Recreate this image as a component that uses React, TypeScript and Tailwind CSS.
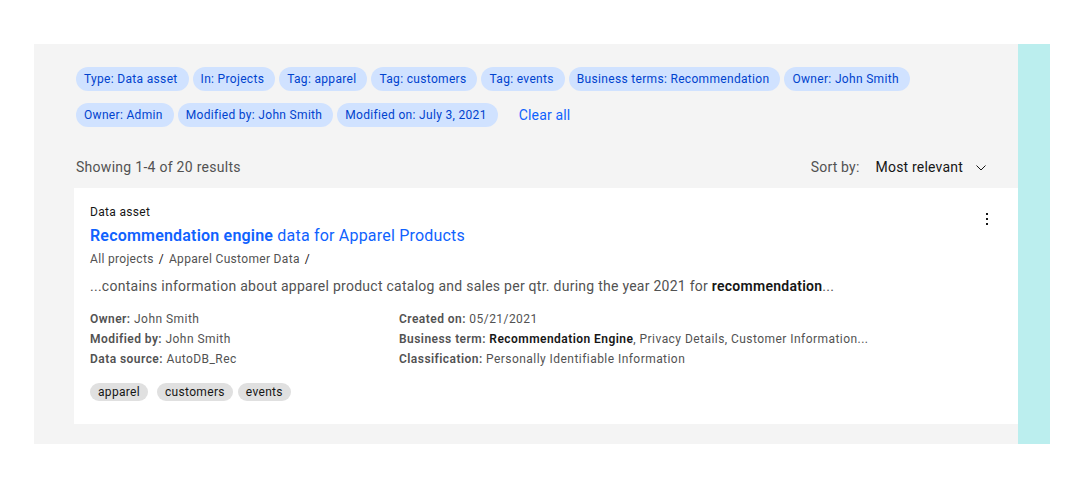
import { JSX } from 'react'

const filters = [
  'Type: Data asset',
  'In: Projects',
  'Tag: apparel',
  'Tag: customers',
  'Tag: events',
  'Business terms: Recommendation',
  'Owner: John Smith',
  'Owner: Admin',
  'Modified by: John Smith',
  'Modified on: July 3, 2021'
]

const FilterTag = ({ label }: { label: string }): JSX.Element => (
  <span className="inline-flex items-center h-6 pl-2 pr-[11px] rounded-full bg-[#d0e2ff] text-[#0043ce] text-[12px] leading-4 tracking-[0.32px] whitespace-nowrap">
    {label}
  </span>
)

const GrayTag = ({ label }: { label: string }): JSX.Element => (
  <span className="inline-flex items-center h-[18px] px-2 rounded-full bg-[#e0e0e0] text-[#161616] text-[12px] leading-4 tracking-[0.32px]">
    {label}
  </span>
)

const Meta = ({ label, children }: { label: string; children: React.ReactNode }): JSX.Element => (
  <div className="text-[12px] leading-5 tracking-[0.45px] text-[#525252] whitespace-nowrap">
    <span className="font-semibold">{label}</span> {children}
  </div>
)

export default function App(): JSX.Element {
  return (
    <div
      className="w-[1085px] h-[488px] bg-white pt-[44px] pl-[34px]"
      style={{ fontFamily: 'Roboto, "Liberation Sans", sans-serif' }}
    >
      <div className="flex h-[400px]">
        <div className="w-[984px] bg-[#f4f4f4] pl-[40px] pt-[23px]">
          {/* active filters */}
          <div className="pl-[2px] flex flex-wrap items-center gap-x-1 gap-y-3 w-[900px]">
            {filters.map((f) => (
              <FilterTag key={f} label={f} />
            ))}
            <button className="ml-[13px] px-1 h-6 text-[14px] leading-[18px] tracking-[0.16px] text-[#0f62fe]">
              Clear all
            </button>
          </div>

          {/* results header */}
          <div className="mt-[20px] h-[41px] pl-[2px] pr-[32px] flex items-center justify-between text-[14px]">
            <span className="text-[#525252] tracking-[0.28px]">Showing 1-4 of 20 results</span>
            <div className="flex items-center">
              <span className="text-[#525252] tracking-[0.2px]">Sort by:</span>
              <span className="ml-[16px] text-[#161616] tracking-[0.2px]">Most relevant</span>
              <svg className="ml-[13px]" width="10" height="6" viewBox="0 0 10 6" fill="none">
                <path d="M0.5 0.5 L5 5 L9.5 0.5" stroke="#161616" strokeWidth="1" />
              </svg>
            </div>
          </div>

          {/* result card */}
          <div className="bg-white pl-4 pr-[24px] pt-[16px] pb-[23px] relative">
            <div className="text-[12px] leading-4 tracking-[0.32px] text-[#161616]">Data asset</div>
            <div className="mt-[4px] text-[16px] leading-6 tracking-[0.2px] text-[#0f62fe]">
              <span className="font-semibold">Recommendation engine</span> data for Apparel Products
            </div>
            <div className="mt-[3px] text-[12px] leading-4 tracking-[0.32px] text-[#525252] flex items-center">
              <span>All projects</span>
              <span className="mx-[5px] text-[#161616]">/</span>
              <span>Apparel Customer Data</span>
              <span className="ml-[5px] text-[#161616]">/</span>
            </div>
            <p className="mt-[9px] text-[14px] leading-5 tracking-[0.26px] text-[#525252]">
              ...contains information about apparel product catalog and sales per qtr. during the year 2021 for{' '}
              <span className="font-semibold text-[#161616]">recommendation</span>...
            </p>
            <div className="mt-[13px] grid grid-cols-[309px_1fr]">
              <div>
                <Meta label="Owner:">John Smith</Meta>
                <Meta label="Modified by:">John Smith</Meta>
                <Meta label="Data source:">AutoDB_Rec</Meta>
              </div>
              <div>
                <Meta label="Created on:">05/21/2021</Meta>
                <Meta label="Business term:">
                  <span className="font-semibold text-[#161616]">Recommendation Engine</span>, Privacy Details,
                  Customer Information...
                </Meta>
                <Meta label="Classification:">Personally Identifiable Information</Meta>
              </div>
            </div>
            <div className="mt-[14px] flex items-center">
              <GrayTag label="apparel" />
              <span className="w-[9px]" />
              <GrayTag label="customers" />
              <span className="w-[5px]" />
              <GrayTag label="events" />
            </div>

            {/* overflow menu */}
            <button className="absolute top-[25px] right-[30px] flex flex-col items-center gap-[3px]">
              <span className="w-[2px] h-[2px] bg-[#161616]" />
              <span className="w-[2px] h-[2px] bg-[#161616]" />
              <span className="w-[2px] h-[2px] bg-[#161616]" />
            </button>
          </div>
        </div>
        <div className="w-[32px] bg-[#bbeeee]" />
      </div>
    </div>
  )
}
